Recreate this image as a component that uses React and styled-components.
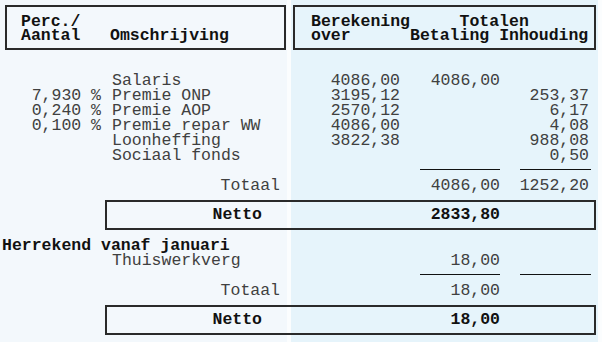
import React from 'react';
import styled, { createGlobalStyle } from 'styled-components';

const GlobalStyle = createGlobalStyle`
  body {
    margin: 0;
    background: #fafcfe;
    font-family: "Liberation Mono", "Courier New", monospace;
    font-size: 16.5px;
    color: #404040;
  }
`;

const Sheet = styled.div`
  width: 602px;
  height: 342px;
  box-sizing: border-box;
  padding-top: 5px;
  overflow: hidden;
  background: linear-gradient(
    to right,
    #f3f8fc 0 287px,
    #fbfdfe 287px 291px,
    #e6f4fb 291px 598px,
    #fbfdfe 598px
  );
`;

const HeaderBar = styled.div`
  display: flex;
  gap: 7px;
  padding-left: 5px;
`;

const HeaderBox = styled.div`
  width: ${(p) => p.$width}px;
  height: 45px;
  box-sizing: border-box;
  border: 2px solid #2a2a2a;
  padding: 8px 0 0 ${(p) => p.$pad}px;
  line-height: 14px;
  font-weight: bold;
  color: #111;
`;

const LeftHead = styled.div`
  display: flex;
  align-items: flex-end;
`;

const HeadStack = styled.div`
  width: 89px;
`;

const RightHead = styled.div`
  display: grid;
  grid-template-columns: 10ch 9ch auto;
`;

const SpanHead = styled.div`
  grid-column: 2 / 4;
  padding-left: 5ch;
`;

const Body = styled.div`
  margin-top: 23px;
  padding-left: 2px;
`;

const Row = styled.div`
  display: grid;
  grid-template-columns: 110px 170px 118px 100px 91px;
  height: 15px;
  line-height: 15px;
  white-space: pre;
`;

const Perc = styled.div`
  text-align: right;
  padding-right: 11px;
`;

const Label = styled.div`
  text-align: ${(p) => (p.$right ? 'right' : 'left')};
  padding-right: 2px;
`;

const Num = styled.div`
  text-align: right;
  padding-right: ${(p) => p.$pr || 0}px;
`;

const Rule = styled.div`
  width: ${(p) => p.$width}px;
  margin-left: auto;
  margin-top: 6px;
  border-top: 1px solid #111;
`;

const NettoBox = styled.div`
  display: grid;
  grid-template-columns: 155px 238px;
  margin: 7px 0 0 103px;
  width: 491px;
  height: 30px;
  box-sizing: border-box;
  border: 2px solid #2a2a2a;
  line-height: 26px;
  font-weight: bold;
  color: #111;
`;

const NettoLabel = styled.div`
  text-align: right;
`;

const SectionTitle = styled.div`
  margin-top: 8px;
  height: 15px;
  line-height: 15px;
  font-weight: bold;
  color: #111;
`;

const lines = [
  { perc: '', label: 'Salaris', over: '4086,00', pay: '4086,00', ded: '' },
  { perc: '7,930 %', label: 'Premie ONP', over: '3195,12', pay: '', ded: '253,37' },
  { perc: '0,240 %', label: 'Premie AOP', over: '2570,12', pay: '', ded: '6,17' },
  { perc: '0,100 %', label: 'Premie repar WW', over: '4086,00', pay: '', ded: '4,08' },
  { perc: '', label: 'Loonheffing', over: '3822,38', pay: '', ded: '988,08' },
  { perc: '', label: 'Sociaal fonds', over: '', pay: '', ded: '0,50' },
];

function Line({ perc, label, over, pay, ded }) {
  return (
    <Row>
      <Perc>{perc}</Perc>
      <Label>{label}</Label>
      <Num>{over}</Num>
      <Num>{pay}</Num>
      <Num $pr={2}>{ded}</Num>
    </Row>
  );
}

function Rules() {
  return (
    <Row>
      <div />
      <div />
      <div />
      <Rule $width={80} />
      <Rule $width={71} />
    </Row>
  );
}

function Totals({ pay, ded }) {
  return (
    <Row>
      <div />
      <Label $right>Totaal</Label>
      <div />
      <Num>{pay}</Num>
      <Num $pr={2}>{ded}</Num>
    </Row>
  );
}

function Netto({ value }) {
  return (
    <NettoBox>
      <NettoLabel>Netto</NettoLabel>
      <Num>{value}</Num>
    </NettoBox>
  );
}

export default function App() {
  return (
    <>
      <GlobalStyle />
      <Sheet>
        <HeaderBar>
          <HeaderBox $width={281} $pad={14}>
            <LeftHead>
              <HeadStack>
                <div>Perc./</div>
                <div>Aantal</div>
              </HeadStack>
              <div>Omschrijving</div>
            </LeftHead>
          </HeaderBox>
          <HeaderBox $width={303} $pad={16}>
            <RightHead>
              <div>Berekening</div>
              <SpanHead>Totalen</SpanHead>
              <div>over</div>
              <div>Betaling</div>
              <div>Inhouding</div>
            </RightHead>
          </HeaderBox>
        </HeaderBar>

        <Body>
          {lines.map((l) => (
            <Line key={l.label} {...l} />
          ))}
          <Rules />
          <Totals pay="4086,00" ded="1252,20" />
          <Netto value="2833,80" />

          <SectionTitle>Herrekend vanaf januari</SectionTitle>
          <Line perc="" label="Thuiswerkverg" over="" pay="18,00" ded="" />
          <Rules />
          <Totals pay="18,00" ded="" />
          <Netto value="18,00" />
        </Body>
      </Sheet>
    </>
  );
}
